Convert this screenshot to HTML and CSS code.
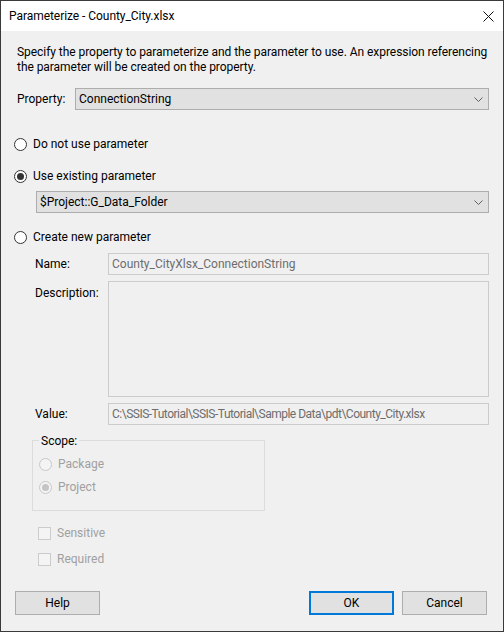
FILE: index.html
```html
<!DOCTYPE html>
<html>
<head>
<meta charset="utf-8">
<link rel="stylesheet" href="styles.css">
</head>
<body>
<div class="window">
  <div class="titlebar">
    <span class="title">Parameterize - County_City.xlsx</span>
    <svg class="close" width="11" height="11" viewBox="0 0 11 11"><path d="M0.5 0.5 L10.5 10.5 M10.5 0.5 L0.5 10.5" stroke="#111" stroke-width="1" fill="none"/></svg>
  </div>
  <div class="content">
    <p class="intro">Specify the property to parameterize and the parameter to use. An expression referencing<br>the parameter will be created on the property.</p>
    <div class="prop-row">
      <span class="prop-label">Property:</span>
      <div class="combo combo-prop">
        <span>ConnectionString</span>
        <svg class="chev" width="9" height="5" viewBox="0 0 9 5"><path d="M0.5 0.5 L4.5 4.5 L8.5 0.5" stroke="#606060" stroke-width="1" fill="none"/></svg>
      </div>
    </div>
    <div class="radio-row r1"><span class="radio"></span><span>Do not use parameter</span></div>
    <div class="radio-row r2"><span class="radio checked"></span><span>Use existing parameter</span></div>
    <div class="combo combo-param">
      <span>$Project::G_Data_Folder</span>
      <svg class="chev" width="9" height="5" viewBox="0 0 9 5"><path d="M0.5 0.5 L4.5 4.5 L8.5 0.5" stroke="#606060" stroke-width="1" fill="none"/></svg>
    </div>
    <div class="radio-row r3"><span class="radio"></span><span>Create new parameter</span></div>
    <div class="field-grid">
      <span class="flabel name-l">Name:</span>
      <div class="tbox name-b">County_CityXlsx_ConnectionString</div>
      <span class="flabel desc-l">Description:</span>
      <div class="tbox desc-b"></div>
      <span class="flabel val-l">Value:</span>
      <div class="tbox val-b">C:\SSIS-Tutorial\SSIS-Tutorial\Sample Data\pdt\County_City.xlsx</div>
    </div>
    <fieldset class="scope">
      <legend>Scope:</legend>
      <div class="radio-row dis sr1"><span class="radio"></span><span>Package</span></div>
      <div class="radio-row dis sr2"><span class="radio checked"></span><span>Project</span></div>
    </fieldset>
    <div class="check-row c1"><span class="check"></span><span>Sensitive</span></div>
    <div class="check-row c2"><span class="check"></span><span>Required</span></div>
    <div class="buttons">
      <div class="btn">Help</div>
      <div class="spacer"></div>
      <div class="btn default">OK</div>
      <div class="btn">Cancel</div>
    </div>
  </div>
</div>
</body>
</html>
```
FILE: styles.css
```css
* { box-sizing: border-box; }
html, body { margin: 0; padding: 0; }
body {
  width: 504px;
  height: 632px;
  font-family: Roboto, "Noto Sans", sans-serif;
  font-size: 12px;
  line-height: 16px;
  color: #000;
  background: #f0f0f0;
}
.window {
  width: 504px;
  height: 632px;
  border: 1px solid #3a3a3a;
  display: flex;
  flex-direction: column;
}
.titlebar {
  height: 30px;
  background: #fff;
  display: flex;
  align-items: center;
  padding: 0 9px 0 8px;
  flex: none;
}
.title { flex: 1; line-height: 16px; letter-spacing: -0.05px; }
.close { flex: none; }
.content {
  flex: 1;
  background: #f0f0f0;
  padding: 14px 14px 0 16px;
  display: flex;
  flex-direction: column;
  align-items: flex-start;
}
.intro {
  margin: 0;
  line-height: 15px;
  font-size: 12px;
  letter-spacing: -0.05px;
  white-space: nowrap;
}
.prop-row {
  margin-top: 13px;
  display: flex;
  align-items: center;
  width: 100%;
}
.prop-label { width: 58px; flex: none; }
.combo {
  height: 22px;
  background: #e1e1e1;
  border: 1px solid #adadad;
  display: flex;
  align-items: center;
  padding: 0 5px 0 3px;
}
.combo span { flex: 1; }
.combo .chev { flex: none; }
.combo-prop { flex: 1; }
.combo-param { align-self: stretch; margin-left: 19px; margin-top: 7px; }
.radio-row {
  display: flex;
  align-items: center;
  height: 16px;
  gap: 6px;
}
.radio {
  width: 13px;
  height: 13px;
  border-radius: 50%;
  border: 1px solid #333;
  background: #fff;
  display: flex;
  align-items: center;
  justify-content: center;
  margin-left: -3px;
}
.radio.checked::after {
  content: "";
  width: 7px;
  height: 7px;
  border-radius: 50%;
  background: #333;
}
.r1 { margin-top: 26px; }
.r2 { margin-top: 16px; }
.r3 { margin-top: 16px; }
.field-grid {
  margin-top: 8px;
  align-self: stretch;
  display: grid;
  grid-template-columns: 73px 1fr;
  row-gap: 6px;
  padding-left: 18px;
}
.flabel { line-height: 22px; }
.tbox {
  height: 22px;
  border: 1px solid #cccccc;
  background: #f0f0f0;
  color: #6d6d6d;
  line-height: 20px;
  padding-left: 3px;
}
.desc-b { height: 116px; }
.desc-l { line-height: 24px; }
.val-b { letter-spacing: -0.5px; }
.scope {
  margin: 8px 0 0 15px;
  width: 233px;
  height: 78px;
  border: 1px solid #dcdcdc;
  padding: 8px 0 0 6px;
}
.scope legend {
  padding: 0 2px;
  margin-left: 0;
  line-height: 15px;
  position: relative;
  top: 1px;
}
.dis { color: #a0a0a0; }
.dis .radio { border-color: #c8c8c8; background: #f4f4f4; margin-left: 0; }
.dis .radio.checked::after { background: #c4c4c4; }
.sr2 { margin-top: 7px; }
.check-row {
  display: flex;
  align-items: center;
  height: 16px;
  gap: 6px;
  color: #a0a0a0;
  margin-left: 21px;
}
.check {
  width: 13px;
  height: 13px;
  border: 1px solid #cccccc;
  background: #f4f4f4;
}
.c1 { margin-top: 14px; }
.c2 { margin-top: 10px; }
.buttons {
  margin-top: 24px;
  align-self: stretch;
  display: flex;
  gap: 8px;
  margin-left: -2px;
  margin-right: 2px;
}
.spacer { flex: 1; }
.btn {
  width: 85px;
  height: 24px;
  border: 1px solid #adadad;
  background: #e1e1e1;
  display: flex;
  align-items: center;
  justify-content: center;
}
.btn.default { border: 2px solid #0078d7; }
```
